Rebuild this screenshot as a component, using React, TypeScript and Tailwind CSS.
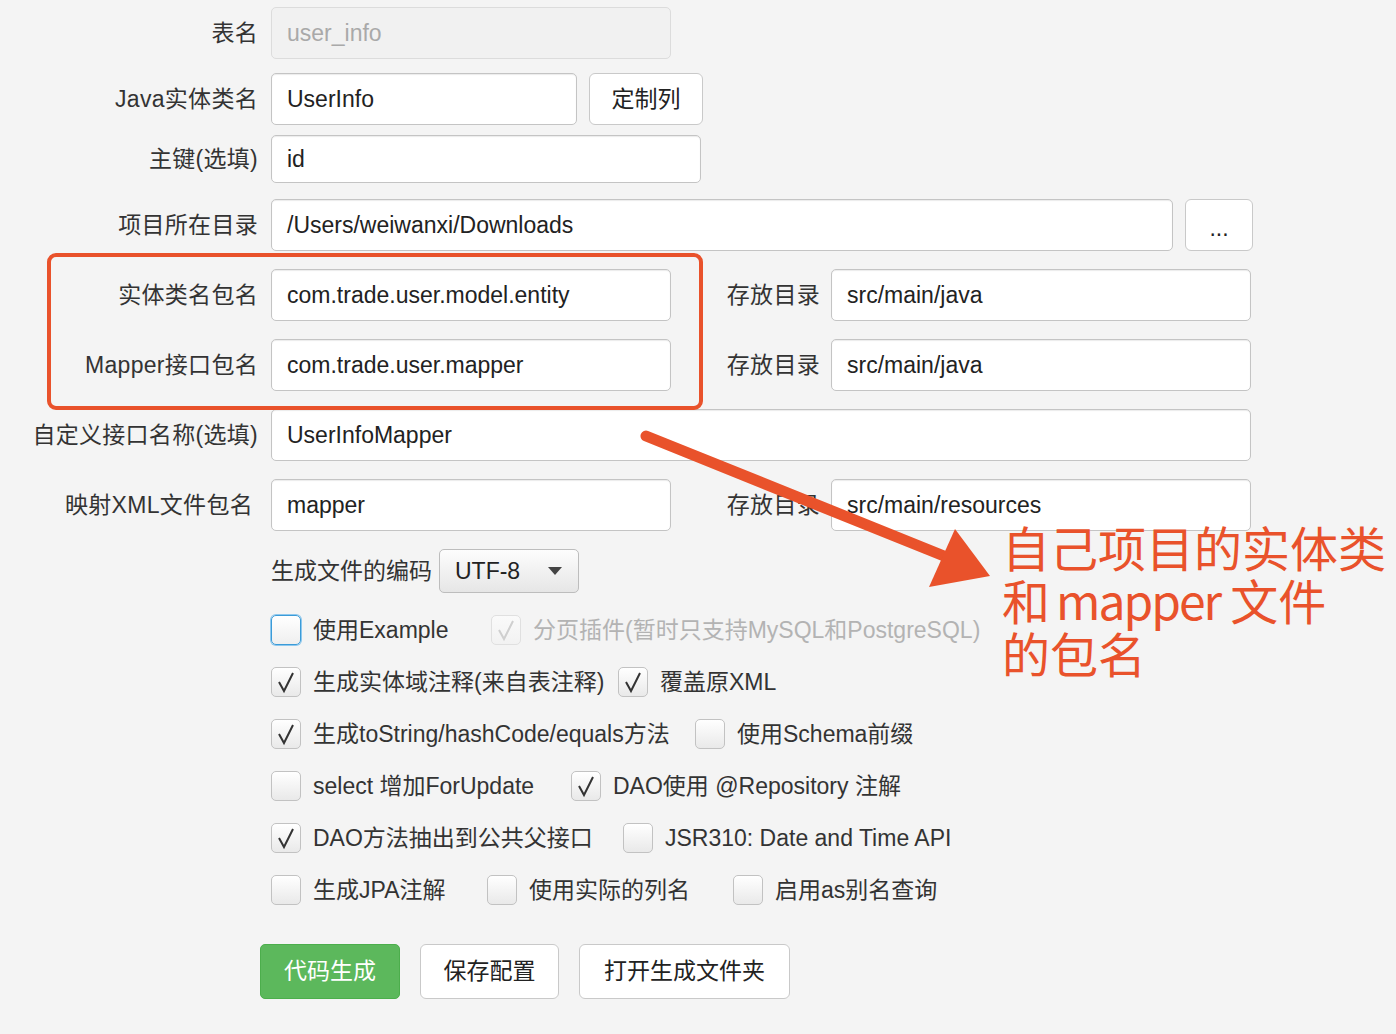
import React from "react";

const FONT = { fontFamily: '"Liberation Sans", "Noto Sans CJK SC", sans-serif' };

function Input({ value, className = "", disabled = false }: { value: string; className?: string; disabled?: boolean }) {
  return (
    <div
      className={`flex items-center rounded-[5px] border px-[15px] text-[23px] ${
        disabled
          ? "border-[#dcdcdc] bg-[#f1f1f1] text-[#a9a9a9]"
          : "border-[#c4c4c4] bg-white text-[#222] shadow-[inset_0_1px_1px_rgba(0,0,0,0.08)]"
      } ${className}`}
    >
      {value}
    </div>
  );
}

function Btn({ label, className = "" }: { label: string; className?: string }) {
  return (
    <div
      className={`flex items-center justify-center rounded-[6px] border border-[#c9c9c9] bg-white text-[23px] text-[#222] ${className}`}
    >
      {label}
    </div>
  );
}

function Row({ label, children, mt, labelPad = "" }: { label: string; children: React.ReactNode; mt: string; labelPad?: string }) {
  return (
    <div className={`flex items-center ${mt}`}>
      <div className={`w-[258px] shrink-0 text-right text-[23px] tracking-[0.3px] text-[#333] ${labelPad}`}>{label}</div>
      <div className="ml-[13px] flex items-center">{children}</div>
    </div>
  );
}

function Check({
  label,
  checked = false,
  focused = false,
  disabled = false,
  width,
}: {
  label: string;
  checked?: boolean;
  focused?: boolean;
  disabled?: boolean;
  width?: string;
}) {
  return (
    <div className={`flex shrink-0 items-center ${width ?? ""}`}>
      <div
        className={`flex h-[30px] w-[30px] shrink-0 items-center justify-center rounded-[5px] border bg-gradient-to-b ${
          focused
            ? "border-[#3b9bd8] from-white to-[#efefef] shadow-[0_0_0_1px_#8ec8ee]"
            : disabled
            ? "border-[#e0e0e0] from-[#fafafa] to-[#f2f2f2]"
            : "border-[#c2c2c2] from-white to-[#e9e9e9]"
        }`}
      >
        {checked && (
          <svg width="22" height="24" viewBox="0 0 22 24">
            <path
              d="M4 12 L9 21 L18 3"
              fill="none"
              stroke={disabled ? "#cfcfcf" : "#333"}
              strokeWidth="2"
              strokeLinejoin="miter"
            />
          </svg>
        )}
      </div>
      <span className={`ml-[12px] whitespace-nowrap text-[23px] ${disabled ? "text-[#b3b3b3]" : "text-[#333]"}`}>
        {label}
      </span>
    </div>
  );
}

export default function App() {
  return (
    <div className="relative h-[1034px] w-[1396px] overflow-hidden bg-[#f4f4f4]" style={FONT}>
      <div className="pt-[7px]">
        {/* form rows */}
        <Row label="表名" mt="">
          <Input value="user_info" disabled className="h-[52px] w-[400px]" />
        </Row>
        <Row label="Java实体类名" mt="mt-[14px]">
          <Input value="UserInfo" className="h-[52px] w-[306px]" />
          <Btn label="定制列" className="ml-[12px] h-[52px] w-[114px]" />
        </Row>
        <Row label="主键(选填)" mt="mt-[10px]">
          <Input value="id" className="h-[48px] w-[430px]" />
        </Row>
        <Row label="项目所在目录" mt="mt-[16px]">
          <Input value="/Users/weiwanxi/Downloads" className="h-[52px] w-[902px]" />
          <Btn label="..." className="ml-[12px] h-[52px] w-[68px] pt-[6px]" />
        </Row>
        <Row label="实体类名包名" mt="mt-[18px]">
          <Input value="com.trade.user.model.entity" className="h-[52px] w-[400px]" />
          <div className="w-[149px] text-right text-[23px] tracking-[0.3px] text-[#333]">存放目录</div>
          <Input value="src/main/java" className="ml-[11px] h-[52px] w-[420px]" />
        </Row>
        <Row label="Mapper接口包名" mt="mt-[18px]">
          <Input value="com.trade.user.mapper" className="h-[52px] w-[400px]" />
          <div className="w-[149px] text-right text-[23px] tracking-[0.3px] text-[#333]">存放目录</div>
          <Input value="src/main/java" className="ml-[11px] h-[52px] w-[420px]" />
        </Row>
        <Row label="自定义接口名称(选填)" mt="mt-[18px]">
          <Input value="UserInfoMapper" className="h-[52px] w-[980px]" />
        </Row>
        <Row label="映射XML文件包名" mt="mt-[18px]" labelPad="pr-[5px]">
          <Input value="mapper" className="h-[52px] w-[400px]" />
          <div className="w-[149px] text-right text-[23px] tracking-[0.3px] text-[#333]">存放目录</div>
          <Input value="src/main/resources" className="ml-[11px] h-[52px] w-[420px]" />
        </Row>

        {/* encoding */}
        <div className="ml-[271px] mt-[18px] flex items-center">
          <span className="w-[168px] text-[23px] text-[#333]">生成文件的编码</span>
          <div className="flex h-[44px] w-[140px] items-center justify-between rounded-[5px] border border-[#bdbdbd] bg-gradient-to-b from-[#fdfdfd] to-[#e6e6e6] pl-[15px] pr-[16px] text-[23px] text-[#222]">
            UTF-8
            <svg width="14" height="8" viewBox="0 0 14 8">
              <path d="M0 0 L14 0 L7 8 Z" fill="#444" />
            </svg>
          </div>
        </div>

        {/* options */}
        <div className="ml-[271px] mt-[11px] flex flex-col">
          <div className="flex h-[52px] items-center">
            <Check label="使用Example" focused width="w-[220px]" />
            <Check label="分页插件(暂时只支持MySQL和PostgreSQL)" checked disabled />
          </div>
          <div className="flex h-[52px] items-center">
            <Check label="生成实体域注释(来自表注释)" checked width="w-[347px]" />
            <Check label="覆盖原XML" checked />
          </div>
          <div className="flex h-[52px] items-center">
            <Check label="生成toString/hashCode/equals方法" checked width="w-[424px]" />
            <Check label="使用Schema前缀" />
          </div>
          <div className="flex h-[52px] items-center">
            <Check label="select 增加ForUpdate" width="w-[300px]" />
            <Check label="DAO使用 @Repository 注解" checked />
          </div>
          <div className="flex h-[52px] items-center">
            <Check label="DAO方法抽出到公共父接口" checked width="w-[352px]" />
            <Check label="JSR310: Date and Time API" />
          </div>
          <div className="flex h-[52px] items-center">
            <Check label="生成JPA注解" width="w-[216px]" />
            <Check label="使用实际的列名" width="w-[246px]" />
            <Check label="启用as别名查询" />
          </div>
        </div>

        {/* actions */}
        <div className="ml-[260px] mt-[28px] flex gap-[20px]">
          <div className="flex h-[55px] w-[140px] items-center justify-center rounded-[5px] border border-[#4cae4c] bg-[#5cb85c] text-[23px] text-white">
            代码生成
          </div>
          <Btn label="保存配置" className="h-[55px] w-[139px]" />
          <Btn label="打开生成文件夹" className="h-[55px] w-[211px]" />
        </div>
      </div>

      {/* annotation overlay */}
      <div className="pointer-events-none absolute left-[47px] top-[253px] h-[157px] w-[656px] rounded-[9px] border-[4px] border-[#e9522b]" />
      <svg className="pointer-events-none absolute left-0 top-0" width="1396" height="1034">
        <line x1="646" y1="436" x2="944" y2="556" stroke="#e9522b" strokeWidth="11" strokeLinecap="round" />
        <polygon points="955,529 990,576 929,587" fill="#e9522b" />
      </svg>
      <div
        className="absolute left-[1002px] top-[520px] text-[48px] leading-[53px] text-[#e9522b]"
        style={{ fontFamily: '"Noto Sans CJK SC", sans-serif' }}
      >
        <div>自己项目的实体类</div>
        <div className="flex">
          <span>和</span>
          <span className="ml-[6px] tracking-[-2px]">mapper</span>
          <span className="ml-[10px]">文件</span>
        </div>
        <div>的包名</div>
      </div>
    </div>
  );
}
